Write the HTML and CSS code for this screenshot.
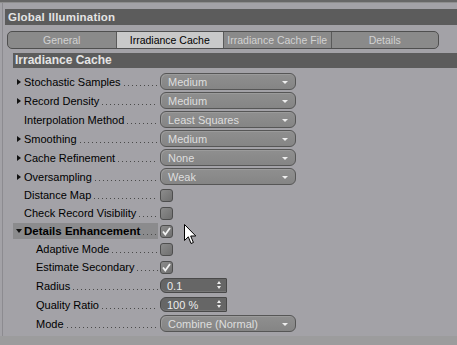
FILE: index.html
```html
<!DOCTYPE html>
<html lang="en">
<head>
  <meta charset="utf-8" />
  <title>Global Illumination</title>
  <link rel="stylesheet" href="styles.css">
</head>
<body>
  <div class="topstrip"></div>
  <div class="frame">
    <div class="gi-header">Global Illumination</div>

    <div class="tabs">
      <div class="tab">General</div>
      <div class="tab active">Irradiance Cache</div>
      <div class="tab">Irradiance Cache File</div>
      <div class="tab">Details</div>
    </div>

    <div class="section">
      <div class="section-header">Irradiance Cache</div>
      <div class="rows">
        <div class="row tall">
          <div class="label"><span class="arrow"></span><span class="text">Stochastic Samples</span><span class="leader"></span></div>
          <div class="select">Medium</div>
        </div>
        <div class="row tall">
          <div class="label"><span class="arrow"></span><span class="text">Record Density</span><span class="leader"></span></div>
          <div class="select">Medium</div>
        </div>
        <div class="row tall">
          <div class="label"><span class="arrow none"></span><span class="text">Interpolation Method</span><span class="leader"></span></div>
          <div class="select">Least Squares</div>
        </div>
        <div class="row tall">
          <div class="label"><span class="arrow"></span><span class="text">Smoothing</span><span class="leader"></span></div>
          <div class="select">Medium</div>
        </div>
        <div class="row tall">
          <div class="label"><span class="arrow"></span><span class="text">Cache Refinement</span><span class="leader"></span></div>
          <div class="select">None</div>
        </div>
        <div class="row tall">
          <div class="label"><span class="arrow"></span><span class="text">Oversampling</span><span class="leader"></span></div>
          <div class="select">Weak</div>
        </div>
        <div class="row">
          <div class="label"><span class="arrow none"></span><span class="text">Distance Map</span><span class="leader"></span></div>
          <div class="check"></div>
        </div>
        <div class="row">
          <div class="label"><span class="arrow none"></span><span class="text">Check Record Visibility</span><span class="leader"></span></div>
          <div class="check"></div>
        </div>
        <div class="row">
          <div class="label group"><span class="arrow open"></span><span class="text">Details Enhancement</span><span class="leader"></span></div>
          <div class="check on"><svg width="11" height="11" viewBox="0 0 11 11"><path d="M2 5.5 L4.3 8.5 L9 2" fill="none" stroke="#f2f2f2" stroke-width="1.8"/></svg></div>
        </div>
        <div class="row">
          <div class="label sub"><span class="text">Adaptive Mode</span><span class="leader"></span></div>
          <div class="check"></div>
        </div>
        <div class="row">
          <div class="label sub"><span class="text">Estimate Secondary</span><span class="leader"></span></div>
          <div class="check on"><svg width="11" height="11" viewBox="0 0 11 11"><path d="M2 5.5 L4.3 8.5 L9 2" fill="none" stroke="#f2f2f2" stroke-width="1.8"/></svg></div>
        </div>
        <div class="row tall">
          <div class="label sub"><span class="text">Radius</span><span class="leader"></span></div>
          <div class="number">0.1<span class="spin"></span></div>
        </div>
        <div class="row tall">
          <div class="label sub"><span class="text">Quality Ratio</span><span class="leader"></span></div>
          <div class="number">100 %<span class="spin"></span></div>
        </div>
        <div class="row tall">
          <div class="label sub"><span class="text">Mode</span><span class="leader"></span></div>
          <div class="select">Combine (Normal)</div>
        </div>
      </div>
    </div>
  </div>
  <div class="bottom"></div>

  <!-- mouse pointer over the panel -->
  <svg class="cursor" width="13" height="21" viewBox="0 0 13 21">
    <path d="M0.5 0.5 L0.5 16.5 L4.3 12.8 L7 19.5 L9.4 18.5 L6.7 12 L11.8 12 Z" fill="#fff" stroke="#000" stroke-width="1"/>
  </svg>
</body>
</html>
```

FILE: styles.css
```css
body {
  margin: 0;
  background-color: #a3a2a7;
  font-family: "Liberation Sans", Arial, sans-serif;
  font-size: 11px;
  color: #000;
  position: relative;
  height: 345px;
  overflow: hidden;
}
.topstrip {
  height: 2px;
  background-color: #676767;
  border-bottom: 1px solid #8e8e8e;
}
.frame {
  margin-left: 2px;
  padding-left: 2px;
  border-left: 1px solid #8c8b90;
  height: 333px;
  overflow: hidden;
}
.gi-header {
  margin-top: 6px;
  height: 16px;
  line-height: 16px;
  padding-left: 3px;
  background-color: #5c5c5c;
  color: #e4e4e4;
  font-weight: bold;
  font-size: 11.5px;
  letter-spacing: 0.2px;
}
.tabs {
  display: grid;
  grid-template-columns: repeat(4, 1fr);
  width: 430px;
  height: 16px;
  margin: 6px 0 0 2px;
  border: 1px solid #4f4f4f;
  border-radius: 5px;
  overflow: hidden;
  background-color: #8a8a8a;
}
.tab {
  line-height: 16px;
  font-size: 10.5px;
  text-align: center;
  color: #d2d2d2;
  border-left: 1px solid #5a5a5a;
  white-space: nowrap;
  overflow: hidden;
}
.tab:first-child {
  border-left: none;
}
.tab.active {
  background-color: #c9c9c9;
  color: #000;
}
.section {
  margin: 4px 0 0 8px;
}
.section-header {
  height: 15px;
  line-height: 15px;
  padding-left: 2px;
  background-color: #5c5c5c;
  color: #e4e4e4;
  font-weight: bold;
  font-size: 12px;
}
.rows {
  padding-top: 4px;
}
.row {
  display: flex;
  align-items: center;
  height: 18px;
}
.row.tall {
  height: 19px;
}
.label {
  display: flex;
  align-items: center;
  width: 145px;
  height: 100%;
  padding-left: 4px;
  box-sizing: border-box;
  margin-right: 2px;
}
.label.sub {
  padding-left: 23px;
}
.label.group {
  height: 16px;
  padding-left: 3px;
  background-color: #8b8b8d;
  font-weight: bold;
  font-size: 11.5px;
}
.arrow {
  width: 0;
  height: 0;
  border-top: 3.5px solid transparent;
  border-bottom: 3.5px solid transparent;
  border-left: 4px solid #111;
  margin-right: 3px;
}
.arrow.none {
  border-left-color: transparent;
}
.arrow.open {
  border-left: 3.5px solid transparent;
  border-right: 3.5px solid transparent;
  border-top: 4px solid #111;
  border-bottom: none;
  margin-right: 2px;
}
.text {
  white-space: nowrap;
}
.leader {
  flex: 1;
  height: 1px;
  margin: 7px 0 0 3px;
  background-image: linear-gradient(to right, #4a4a4a 1px, transparent 1px);
  background-size: 4px 1px;
}
.select {
  position: relative;
  width: 136px;
  height: 17px;
  line-height: 16px;
  box-sizing: border-box;
  padding-left: 7px;
  border: 1px solid #565656;
  border-radius: 6px;
  background: linear-gradient(#8f8f8f, #858585);
  box-shadow: inset 1px 1px 0 #9b9b9b;
  color: #dedede;
}
.select::after {
  content: "";
  position: absolute;
  right: 7px;
  top: 7px;
  border-left: 3px solid transparent;
  border-right: 3px solid transparent;
  border-top: 3px solid #eeeeee;
}
.check {
  width: 13px;
  height: 13px;
  box-sizing: border-box;
  border: 1px solid #4e4e4e;
  border-radius: 3px;
  background: linear-gradient(135deg, #8c8c8c, #6f6f6f);
  display: flex;
  align-items: center;
  justify-content: center;
}
.number {
  position: relative;
  width: 67px;
  height: 15px;
  line-height: 14px;
  box-sizing: border-box;
  padding-left: 6px;
  border: 1px solid #494949;
  border-radius: 6px 1px 1px 6px;
  background-color: #666666;
  box-shadow: inset 0 -1px 0 #777;
  color: #ececec;
}
.spin,
.spin::after {
  position: absolute;
  width: 0;
  height: 0;
  border-left: 2.5px solid transparent;
  border-right: 2.5px solid transparent;
}
.spin {
  right: 5px;
  top: 2px;
  border-bottom: 3px solid #eeeeee;
}
.spin::after {
  content: "";
  left: -2.5px;
  top: 5px;
  border-top: 3px solid #eeeeee;
}
.bottom {
  height: 10px;
  background-color: #9c9c9d;
}
.cursor {
  position: absolute;
  left: 184px;
  top: 224px;
}
```
